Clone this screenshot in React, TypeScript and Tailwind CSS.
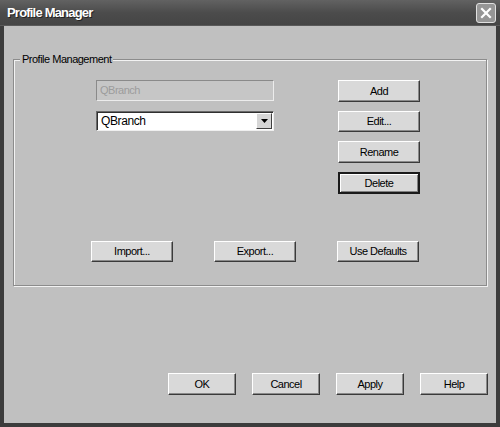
import React from 'react'

const font = { fontFamily: '"Liberation Sans", Arial, sans-serif' }

function Btn({ label, w = 'w-[82px]', h = 'h-[21px]', def = false }: { label: string; w?: string; h?: string; def?: boolean }) {
  return (
    <button
      className={`${w} ${h} flex items-center justify-center bg-[#d9d9d9] text-[11px] tracking-[-0.5px] text-black ${
        def
          ? 'border-2 border-[#1a1a1a] shadow-[inset_1px_1px_0_#fff,inset_-1px_-1px_0_#808080]'
          : 'border border-t-white border-l-white border-r-[#3a3a3a] border-b-[#3a3a3a] shadow-[inset_-1px_-1px_0_#8a8a8a]'
      }`}
    >
      {label}
    </button>
  )
}

export default function App() {
  return (
    <div style={font} className="w-[500px] h-[427px] flex flex-col bg-[#c0c0c0] border-x-4 border-b-4 border-[#3c3c3c] select-none">
      {/* title bar */}
      <div className="h-[26px] -mx-1 flex items-center justify-between pl-[7px] pr-[4px] bg-gradient-to-b from-[#626262] via-[#4c4c4c] to-[#454545] border-b border-[#5a5a5a]">
        <span className="text-white font-bold text-[13px] tracking-[-0.8px] [text-shadow:1px_1px_0_#222]">Profile Manager</span>
        <div className="w-[20px] h-[20px] rounded-[3px] border border-[#e0e0e0] bg-[#969696] flex items-center justify-center">
          <svg width="12" height="12" viewBox="0 0 12 12">
            <path d="M2 2 L10 10 M10 2 L2 10" stroke="#fff" strokeWidth="2.2" strokeLinecap="square" />
          </svg>
        </div>
      </div>

      {/* body */}
      <div className="flex-1 flex flex-col">
        {/* group box */}
        <div className="relative ml-[9px] mr-[9px] mt-[33px] border border-[#8c8c8c] shadow-[inset_1px_1px_0_#f2f2f2,1px_1px_0_#f2f2f2] pt-[20px] pb-[23px]">
          <span className="absolute -top-[8px] left-[6px] px-[2px] bg-[#c0c0c0] text-[11px] tracking-[-0.5px] text-black leading-[14px]">Profile Management</span>

          <div className="flex">
            <div className="ml-[82px] w-[178px] flex flex-col">
              <div className="h-[21px] flex items-center px-[3px] bg-[#c6c6c6] border border-t-[#8a8a8a] border-l-[#8a8a8a] border-r-[#ececec] border-b-[#ececec] text-[11px] tracking-[-0.5px] text-[#9c9c9c]">
                QBranch
              </div>
              <div className="mt-[10px] h-[20px] flex items-center bg-white border border-t-[#6a6a6a] border-l-[#6a6a6a] border-r-[#efefef] border-b-[#efefef] shadow-[inset_1px_1px_0_#303030]">
                <span className="flex-1 pl-[4px] text-[12px] tracking-[-0.4px] text-black">QBranch</span>
                <div className="w-[16px] h-[16px] mr-[1px] flex items-center justify-center bg-[#d6d6d6] border border-t-white border-l-white border-r-[#404040] border-b-[#404040]">
                  <svg width="7" height="4" viewBox="0 0 7 4">
                    <path d="M0 0 H7 L3.5 4 Z" fill="#000" />
                  </svg>
                </div>
              </div>
            </div>
            <div className="ml-[64px] flex flex-col gap-[9px]">
              <Btn label="Add" h="h-[22px]" />
              <Btn label="Edit..." h="h-[21px]" />
              <Btn label="Rename" h="h-[22px]" />
              <Btn label="Delete" h="h-[22px]" def />
            </div>
          </div>

          <div className="flex mt-[47px] ml-[77px] gap-[41px]">
            <Btn label="Import..." />
            <Btn label="Export..." />
            <Btn label="Use Defaults" />
          </div>
        </div>

        {/* dialog buttons */}
        <div className="flex ml-[164px] mt-[87px] gap-[16px]">
          <Btn label="OK" w="w-[68px]" h="h-[22px]" />
          <Btn label="Cancel" w="w-[68px]" h="h-[22px]" />
          <Btn label="Apply" w="w-[68px]" h="h-[22px]" />
          <Btn label="Help" w="w-[68px]" h="h-[22px]" />
        </div>
      </div>
    </div>
  )
}
